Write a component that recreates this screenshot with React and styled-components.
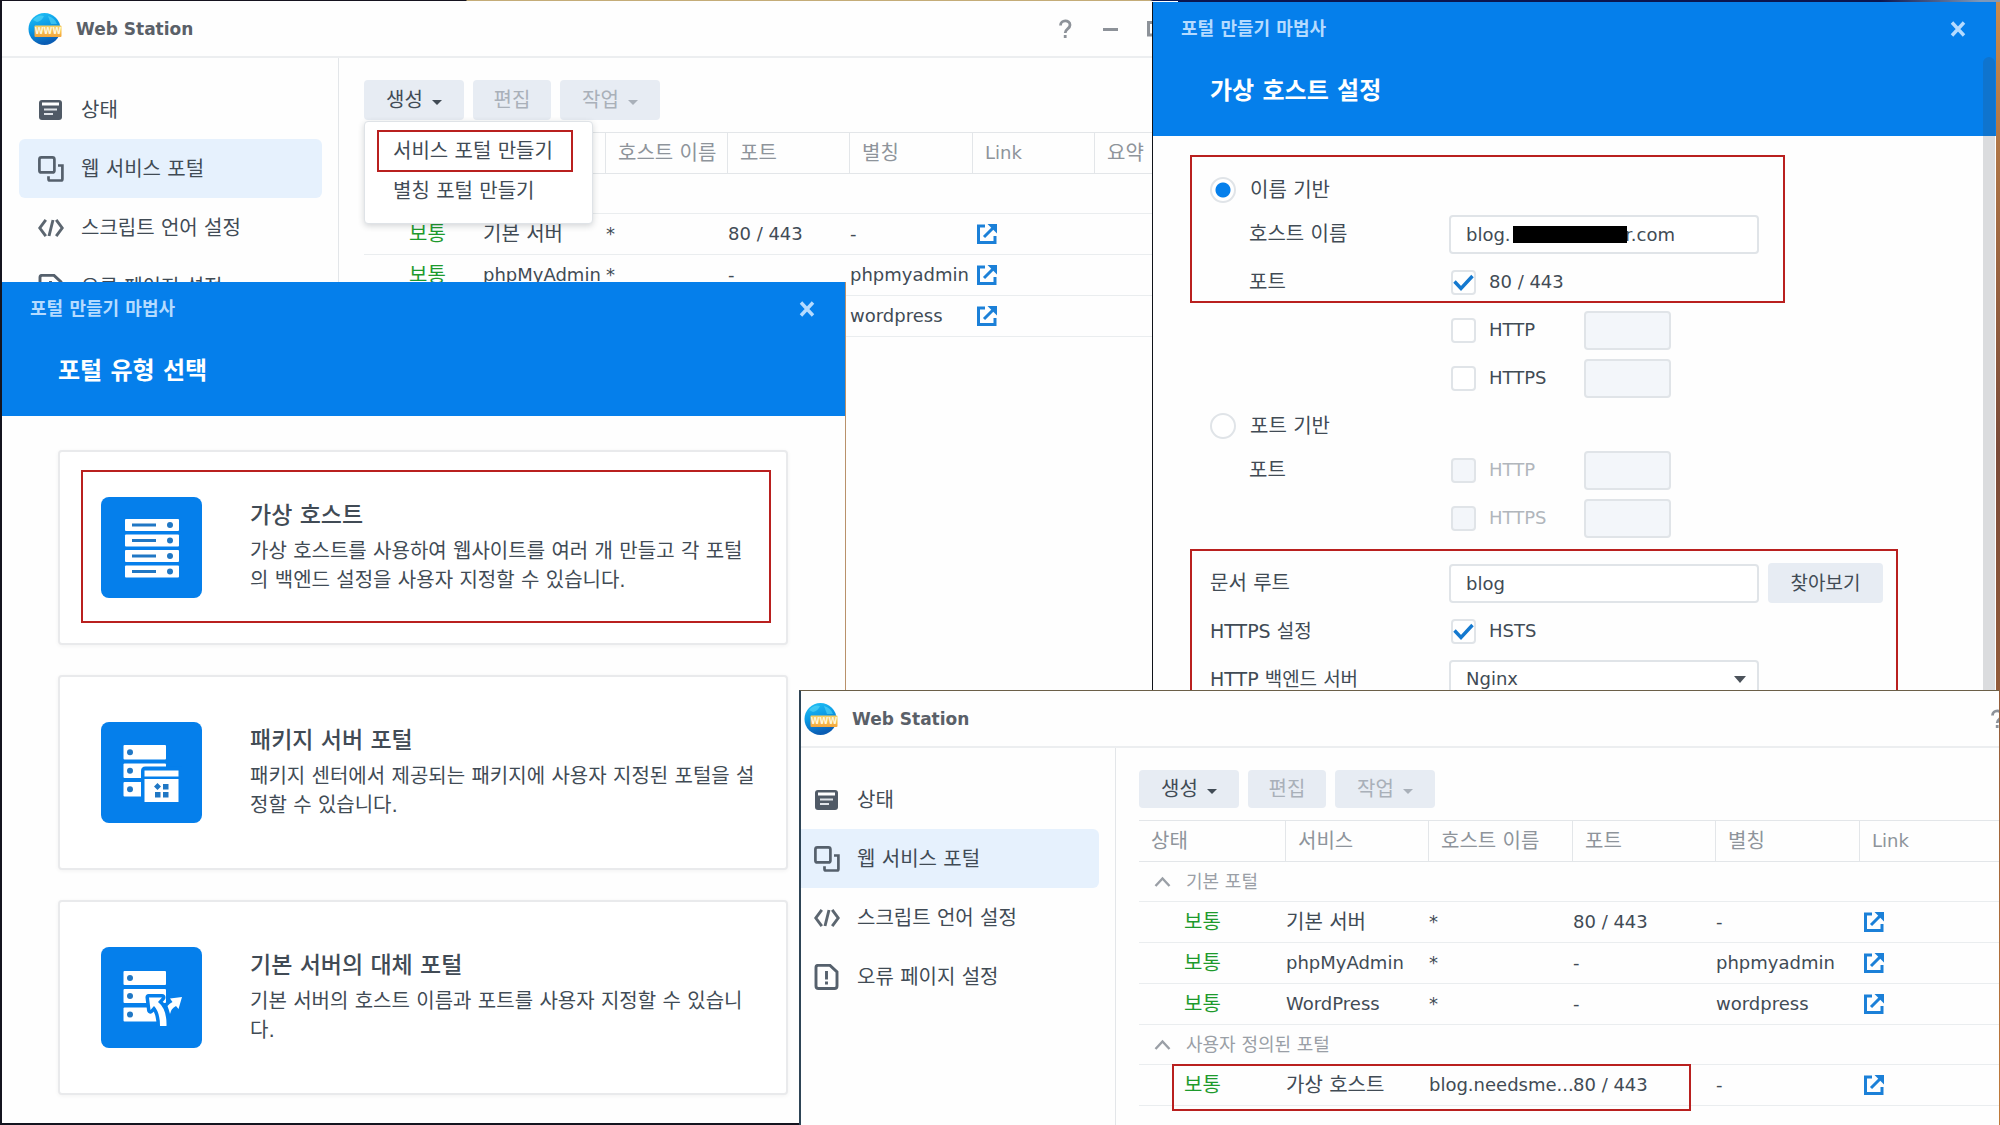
import React from "react";
import styled, { createGlobalStyle, css } from "styled-components";

const GlobalStyle = createGlobalStyle`
  *, *::before, *::after { box-sizing: border-box; }
  body {
    margin: 0;
    color: #414b55;
    font: 18px/24px "DejaVu Sans", "Noto Sans CJK KR", sans-serif;
  }
  button, input, select { font: inherit; color: inherit; }
`;

const BLUE = "#057feb";
const LINE = "#e3e6e9";

const Desktop = styled.div`
  position: relative;
  min-height: 100vh;
  overflow: hidden;
  background:
    linear-gradient(90deg, #15131f 466px, #c4ac78 467px 1150px, #0a1550 1153px 1880px, #7f98b8 1980px) top / 100% 2px no-repeat,
    linear-gradient(#c98a4c, #7a4a38 40%, #c07a3a) right / 4px 100% no-repeat,
    #14141f;
`;

/* ---------- application windows ---------- */

const FirstWindow = styled.section`
  position: absolute;
  top: 1px;
  left: 2px;
  bottom: 2px;
  width: 1176px;
  background: #fefefe;
`;

const SecondWindow = styled.section`
  position: absolute;
  top: 690px;
  left: 799px;
  right: 1px;
  bottom: 0;
  overflow: hidden;
  background: #fefefe;
  border-left: 2px solid #2e4456;
  border-top: 1px solid #6b5f48;
`;

const WideContent = styled.div`
  width: calc(100% + 111px);
`;

const TitleBar = styled.header`
  display: flex;
  align-items: center;
  height: 57px;
  padding-left: ${(p) => p.$inset}px;
  border-bottom: 2px solid #eceef0;
`;

const AppName = styled.h1`
  flex: 1;
  margin: 0 0 0 14px;
  font-size: 17px;
  line-height: 24px;
  font-weight: 700;
  color: #5a6068;
`;

const WindowButton = styled.button`
  display: grid;
  place-items: center;
  width: 45px;
  height: 45px;
  padding: 0;
  border: 0;
  background: none;
  color: #8d9299;
`;

const Columns = styled.div`
  display: flex;
  min-height: 440px;
`;

const Sidebar = styled.nav`
  flex: none;
  width: ${(p) => p.$width}px;
  padding: 22px 16px 0 ${(p) => p.$inset}px;
  border-right: 1px solid ${LINE};
`;

const NavLink = styled.a`
  display: flex;
  align-items: center;
  gap: 17px;
  height: 59px;
  padding-left: ${(p) => p.$indent}px;
  border-radius: ${(p) => (p.$cut ? "0 6px 6px 0" : "6px")};
  background: ${(p) => (p.$active ? "#e6f1fd" : "none")};
  color: inherit;
  font-size: 20px;
  text-decoration: none;
`;

const Main = styled.main`
  position: relative;
  flex: 1;
  min-width: 0;
  padding: 22px 0 0 ${(p) => p.$inset}px;
`;

const Toolbar = styled.div`
  display: flex;
  gap: 9px;
  height: ${(p) => (p.$compact ? 38 : 40)}px;
  margin-bottom: 12px;
`;

const ToolButton = styled.button`
  display: flex;
  align-items: center;
  justify-content: center;
  gap: 9px;
  width: ${(p) => (p.$drop ? 100 : 78)}px;
  padding: 0;
  border: 0;
  border-radius: 4px;
  background: #e7ecf3;
  font-size: 20px;
  line-height: 24px;
  &:disabled { color: #a9b0b9; }
`;

const Caret = styled.span`
  margin-top: 4px;
  border: 5px solid transparent;
  border-top-color: currentColor;
  border-bottom: 0;
`;

const Menu = styled.ul`
  position: absolute;
  top: 63px;
  left: 25px;
  z-index: 2;
  width: 229px;
  margin: 0;
  padding: 9px 0 12px;
  list-style: none;
  background: #fff;
  border: 1px solid #dfe3e7;
  border-radius: 4px;
  box-shadow: 0 2px 6px rgba(40, 50, 60, 0.2);
`;

const MenuItem = styled.li`
  height: 40px;
  margin: 0 20px 0 13px;
  outline: ${(p) => (p.$marked ? "2px solid #b9201f" : "none")};
  outline-offset: -1px;
  button {
    width: 100%;
    height: 40px;
    padding: 0 0 0 15px;
    border: 0;
    background: none;
    font-size: 20px;
    text-align: left;
    white-space: nowrap;
  }
`;

const PortalTable = styled.table`
  width: 100%;
  table-layout: fixed;
  border-collapse: separate;
  border-spacing: 0;
  th {
    height: 42px;
    padding: 0 0 0 12px;
    border: 1px solid ${LINE};
    border-width: 1px 0 1px 1px;
    color: #8e949b;
    font-weight: 400;
    text-align: left;
    white-space: nowrap;
  }
  th:first-child { border-left: 0; }
  td {
    height: 41px;
    padding: 0 0 0 1px;
    border-bottom: 1px solid #eaedef;
    white-space: nowrap;
  }
  td:only-child { height: 40px; }
`;

const Cell = styled.td`
  font-size: ${(p) => (p.$korean ? 20 : 18)}px;
`;

const HeadText = styled.span`
  visibility: ${(p) => (p.$covered ? "hidden" : "visible")};
  font-size: ${(p) => (p.$korean ? 20 : 18)}px;
`;

const Status = styled.span`
  padding-left: 44px;
  font-size: 20px;
  color: #1d9a2c;
`;

const GroupLabel = styled.span`
  visibility: ${(p) => (p.$covered ? "hidden" : "visible")};
  display: flex;
  align-items: center;
  gap: 15px;
  padding-left: 14px;
  color: #9a9fa6;
`;

const LinkAnchor = styled.a`
  display: block;
  height: 22px;
  padding-left: 3px;
  color: #1b80d8;
`;

const Marker = styled.div`
  position: absolute;
  top: ${(p) => p.$top}px;
  left: ${(p) => p.$left}px;
  width: ${(p) => p.$width}px;
  height: ${(p) => p.$height}px;
  border: 2px solid #b9201f;
  pointer-events: none;
`;

/* ---------- wizard dialogs ---------- */

const dialog = css`
  position: absolute;
  background: #fefefe;
  overflow: hidden;
`;

const TypeDialog = styled.section`
  ${dialog}
  top: 282px;
  left: 2px;
  bottom: 2px;
  width: 844px;
  border-right: 1px solid #b9916b;
`;

const HostDialog = styled.section`
  ${dialog}
  top: 2px;
  left: 1152px;
  right: 4px;
  bottom: 0;
  border-left: 1px solid #10131a;
`;

const DialogHead = styled.header`
  height: 134px;
  background: ${BLUE};
  color: #fff;
`;

const DialogBar = styled.div`
  display: flex;
  align-items: center;
  justify-content: space-between;
  height: 53px;
  padding: 0 28px;
  color: #b5dbff;
  font-weight: 700;
`;

const CloseButton = styled.button`
  display: grid;
  place-items: center;
  width: 20px;
  height: 20px;
  padding: 0;
  border: 0;
  background: none;
`;

const DialogTitle = styled.h2`
  margin: 0;
  padding-left: ${(p) => p.$inset}px;
  font-size: 24px;
  line-height: 72px;
  font-weight: 700;
`;

const CardList = styled.div`
  display: flex;
  flex-direction: column;
  gap: 30px;
  padding: 34px 57px 0 56px;
`;

const Card = styled.button`
  position: relative;
  display: flex;
  align-items: center;
  gap: 48px;
  height: 195px;
  padding: 0 20px 0 41px;
  border: 2px solid #e9eaec;
  border-radius: 4px;
  background: #fff;
  box-shadow: 0 1px 4px rgba(0, 0, 0, 0.05);
  text-align: left;
  svg { flex: none; }
`;

const CardText = styled.span`
  width: 508px;
  padding-bottom: 6px;
  font-size: 20px;
  line-height: 29px;
`;

const CardName = styled.strong`
  display: block;
  font-size: 23px;
  line-height: 43px;
  font-weight: 500;
`;

const Form = styled.form`
  padding: 30px 0 0 57px;
`;

const Field = styled.div`
  display: flex;
  align-items: center;
  height: 48px;
`;

const FieldLabel = styled.label`
  width: 239px;
  padding-left: ${(p) => (p.$nested ? 39 : 0)}px;
  font-size: ${(p) => (p.$mixed ? 19 : 20)}px;
`;

const RadioRow = styled.label`
  display: flex;
  align-items: center;
  gap: 14px;
  height: 44px;
  padding-top: 4px;
  font-size: 20px;
`;

const Radio = styled.input`
  appearance: none;
  width: 26px;
  height: 26px;
  margin: 0;
  border: 2px solid #e0e4e8;
  border-radius: 50%;
  background: #fff;
  &:checked { background: radial-gradient(circle, ${BLUE} 7px, #fff 8px); }
`;

const CheckLabel = styled.label`
  display: flex;
  align-items: center;
  gap: 13px;
  width: 135px;
  color: ${(p) => (p.$off ? "#b1b6bc" : "inherit")};
`;

const CheckFrame = styled.span`
  display: grid;
  margin-left: 2px;
  > * { grid-area: 1 / 1; }
`;

const Check = styled.input`
  appearance: none;
  width: 25px;
  height: 25px;
  margin: 0;
  border: 2px solid #e0e4e8;
  border-radius: 4px;
  background: #fff;
  &:disabled { background: #f3f6fa; }
`;

const box = css`
  height: 39px;
  border: 2px solid #e0e4e8;
  border-radius: 4px;
  background: #fff;
`;

const TextBox = styled.input`
  ${box}
  width: 310px;
  padding: 0 15px;
`;

const PortBox = styled.input`
  ${box}
  width: 87px;
  background: #f3f6fa;
`;

const Picker = styled.select`
  ${box}
  appearance: none;
  width: 310px;
  padding: 0 15px;
`;

const PickerFrame = styled.span`
  display: grid;
  align-items: center;
  > * { grid-area: 1 / 1; }
`;

const PickerCaret = styled.span`
  justify-self: end;
  margin-right: 13px;
  border: 6px solid transparent;
  border-top: 7px solid #4c535b;
  border-bottom: 0;
`;

const MaskedField = styled.span`
  position: relative;
`;

const Redaction = styled.span`
  position: absolute;
  top: 11px;
  left: 64px;
  width: 114px;
  height: 17px;
  background: #000;
`;

const BrowseButton = styled.button`
  width: 115px;
  height: 40px;
  margin-left: 9px;
  border: 0;
  border-radius: 4px;
  background: #e7ecf3;
  font-size: 19px;
`;

const Section = styled.div`
  margin-top: 17px;
`;

const ScrollThumb = styled.div`
  position: absolute;
  top: 55px;
  right: 1px;
  bottom: 0;
  width: 12px;
  border-radius: 6px;
  background: rgba(60, 65, 75, 0.18);
`;

/* ---------- drawings ---------- */

const Globe = ({ id }) => (
  <svg width="34" height="34" viewBox="0 0 34 34" aria-hidden="true">
    <defs>
      <linearGradient id={id} x1="0" y1="0" x2="0.3" y2="1">
        <stop offset="0" stopColor="#22c3f6" />
        <stop offset="0.5" stopColor="#0b9be6" />
        <stop offset="1" stopColor="#0a5db4" />
      </linearGradient>
      <linearGradient id={id + "b"} x1="0" y1="0" x2="0" y2="1">
        <stop offset="0" stopColor="#f9cf62" />
        <stop offset="1" stopColor="#f3a73c" />
      </linearGradient>
    </defs>
    <circle cx="16.5" cy="17" r="16" fill={`url(#${id})`} />
    <path d="M5 8q5-6 11-4q-2 5-7 6zM20 4q7 2 9 8h-6z" fill="#5fdcf8" opacity="0.55" />
    <rect x="6.500" y="13.500" width="27" height="11.500" rx="1" fill={`url(#${id}b)`} />
    <text x="20" y="22" textAnchor="middle" fontSize="8" fontWeight="700" fill="#fff7dc">WWW</text>
  </svg>
);

const StatusIcon = () => (
  <svg width="26" height="26" viewBox="0 0 26 26" aria-hidden="true">
    <rect x="1" y="3" width="23" height="20" rx="3" fill="#505a66" />
    <path d="M4 7h17" stroke="#fff" strokeWidth="3" />
    <path d="M6 12.500h13M6 17h9" stroke="#dfe3e8" strokeWidth="2" />
  </svg>
);

const PortalIcon = () => (
  <svg width="26" height="26" viewBox="0 0 26 26" fill="none" stroke="#55606c" strokeWidth="2.700" aria-hidden="true">
    <rect x="1.400" y="1.400" width="15" height="15" rx="2" />
    <path d="M20 9.500h4.400V23a1.500 1.500 0 0 1-1.500 1.500H12a1.500 1.500 0 0 1-1.500-1.500v-2.800" />
  </svg>
);

const CodeIcon = () => (
  <svg width="26" height="26" viewBox="0 0 26 26" fill="none" stroke="#5c6670" strokeWidth="2.900" aria-hidden="true">
    <path d="M7.800 4.800L1.800 13l6 8.200M18.200 4.800l6 8.200l-6 8.200M15 5l-4 16" />
  </svg>
);

const ErrorPageIcon = () => (
  <svg width="26" height="26" viewBox="0 0 26 26" fill="none" stroke="#55606c" strokeWidth="2.900" aria-hidden="true">
    <path d="M4 1.400h12l7 6.500V22a2.500 2.500 0 0 1-2.500 2.500H4.500A2.500 2.500 0 0 1 2 22V3.500A2.100 2.100 0 0 1 4 1.400z" />
    <path d="M12.500 7v8.500M12.500 17.500v3" />
  </svg>
);

const OpenIcon = () => (
  <svg width="22" height="22" viewBox="0 0 22 22" fill="none" stroke="currentColor" strokeWidth="3" aria-hidden="true">
    <path d="M9 3H2.500v16.500H19v-6.500" />
    <path d="M8 14L18 4" />
    <path d="M11.500 1H21v9.500z" fill="currentColor" stroke="none" />
  </svg>
);

const ChevronUp = () => (
  <svg width="17" height="12" viewBox="0 0 17 12" fill="none" stroke="#9a9fa6" strokeWidth="2.400" aria-hidden="true">
    <path d="M1.500 10l7-7.500l7 7.500" />
  </svg>
);

const CloseIcon = () => (
  <svg width="16" height="16" viewBox="0 0 16 16" fill="none" stroke="#b5dbff" strokeWidth="3.400" aria-hidden="true">
    <path d="M2 1.500l12 13M14 1.500L2 14.500" />
  </svg>
);

const Tick = () => (
  <svg width="25" height="25" viewBox="0 0 25 25" fill="none" stroke="#1479cf" strokeWidth="3.400" aria-hidden="true">
    <path d="M3.500 11.500l6.500 7L21.500 6" />
  </svg>
);

const HelpIcon = () => (
  <svg width="16" height="20" viewBox="0 0 16 20" fill="none" stroke="currentColor" strokeWidth="2.800" aria-hidden="true">
    <path d="M2.500 6.500C2.500 0.500 12 0.500 12 6c0 4-4.800 3.800-4.800 8" />
    <path d="M7.200 16v3" />
  </svg>
);

const MinimizeIcon = () => (
  <svg width="16" height="16" viewBox="0 0 16 16" aria-hidden="true">
    <path d="M0 8.500h15" stroke="currentColor" strokeWidth="3" />
  </svg>
);

const MaximizeIcon = () => (
  <svg width="17" height="17" viewBox="0 0 17 17" aria-hidden="true">
    <path d="M1.500 2.500h14v12.500h-14z" fill="none" stroke="currentColor" strokeWidth="3" />
  </svg>
);

const HostArt = () => (
  <svg width="101" height="101" viewBox="0 0 101 101" aria-hidden="true">
    <rect width="101" height="101" rx="8" fill={BLUE} />
    {[22, 37.5, 53, 68.5].map((y) => (
      <g key={y}>
        <rect x="24" y={y} width="54" height="12" rx="1" fill="#fff" />
        <path d={`M31 ${y + 6}h24`} stroke="#2077c4" strokeWidth="3" />
        <circle cx="69" cy={y + 6} r="3" fill="#2077c4" />
      </g>
    ))}
  </svg>
);

const PackageArt = () => (
  <svg width="101" height="101" viewBox="0 0 101 101" aria-hidden="true">
    <rect width="101" height="101" rx="8" fill={BLUE} />
    {[23, 41.5, 60].map((y) => (
      <g key={y}>
        <rect x="22.500" y={y} width="42.500" height="14.500" rx="1" fill="#fff" />
        <circle cx="29" cy={y + 7.2} r="3" fill="#2077c4" />
      </g>
    ))}
    <path d="M40 84V49q0-4.500 4.500-4.500H81v39.500z" fill={BLUE} />
    <path d="M43.500 48.500h34v6h-34zM43.500 57h34v23h-34z" fill="#fff" />
    <path d="M56.500 61l3.500 3.500l-3.500 3.500l-3.500-3.500zM62 62h5.500v5.500H62zM54 70h5.500v5.500H54zM62 70h5.500v5.500H62z" fill="#2077c4" />
  </svg>
);

const AlternateArt = () => (
  <svg width="101" height="101" viewBox="0 0 101 101" aria-hidden="true">
    <rect width="101" height="101" rx="8" fill={BLUE} />
    {[24, 42, 60.5].map((y) => (
      <g key={y}>
        <rect x="22.500" y={y} width="42.500" height="14" rx="1" fill="#fff" />
        <circle cx="29" cy={y + 7} r="3" fill="#2077c4" />
      </g>
    ))}
    <path d="M48 50.500h13l-4 4.500q9 7 8.500 24h-6.500q0-14-6-20l-3.500 4z" fill={BLUE} stroke={BLUE} strokeWidth="7" strokeLinejoin="round" />
    <path d="M48 50.500h13l-4 4.500q9 7 8.500 24h-6.500q0-14-6-20l-3.500 4z" fill="#fff" />
    <path d="M66.500 59q2-2.500 5-4l-2.500-3.500l12-1.500l-3.500 12l-2.500-3q-5 2.500-6 8q-1-4-2.500-8z" fill="#fff" />
  </svg>
);

/* ---------- content ---------- */

const hangul = /[\uac00-\ud7a3]/;
const headings = ["상태", "서비스", "호스트 이름", "포트", "별칭", "Link", "요약"];
const defaultPortals = [
  ["기본 서버", "*", "80 / 443", "-"],
  ["phpMyAdmin", "*", "-", "phpmyadmin"],
  ["WordPress", "*", "-", "wordpress"],
];
const customPortals = [["가상 호스트", "blog.needsme...", "80 / 443", "-"]];

const navItems = [
  ["상태", StatusIcon],
  ["웹 서비스 포털", PortalIcon],
  ["스크립트 언어 설정", CodeIcon],
  ["오류 페이지 설정", ErrorPageIcon],
];

const cards = [
  ["가상 호스트", "가상 호스트를 사용하여 웹사이트를 여러 개 만들고 각 포털의 백엔드 설정을 사용자 지정할 수 있습니다.", HostArt],
  ["패키지 서버 포털", "패키지 센터에서 제공되는 패키지에 사용자 지정된 포털을 설정할 수 있습니다.", PackageArt],
  ["기본 서버의 대체 포털", "기본 서버의 호스트 이름과 포트를 사용자 지정할 수 있습니다.", AlternateArt],
];

const maskedHost = "blog." + "\u00a0".repeat(20) + "r.com";

function Navigation({ width, inset, indent, cut }) {
  return (
    <Sidebar $width={width} $inset={inset}>
      {navItems.map(([label, Icon], i) => (
        <NavLink key={label} href="#" $active={i === 1} $indent={indent} $cut={cut}>
          <Icon />
          {label}
        </NavLink>
      ))}
    </Sidebar>
  );
}

function Actions({ compact }) {
  return (
    <Toolbar $compact={compact}>
      <ToolButton type="button" $drop>생성 <Caret /></ToolButton>
      <ToolButton type="button" disabled>편집</ToolButton>
      <ToolButton type="button" disabled $drop>작업 <Caret /></ToolButton>
    </Toolbar>
  );
}

function Group({ label, rows, span, covered }) {
  return (
    <tbody>
      <tr>
        <td colSpan={span}><GroupLabel $covered={covered}><ChevronUp />{label}</GroupLabel></td>
      </tr>
      {rows.map((row) => (
        <tr key={row[0]}>
          <td><Status>보통</Status></td>
          {row.map((text, i) => (
            <Cell key={i} $korean={hangul.test(text)}>{text}</Cell>
          ))}
          <td colSpan={span - 5}>
            <LinkAnchor href="#" aria-label={row[0]}><OpenIcon /></LinkAnchor>
          </td>
        </tr>
      ))}
    </tbody>
  );
}

/* menuOpen hides the labels that lie beneath the open drop-down menu */
function Portals({ widths, custom, menuOpen }) {
  return (
    <PortalTable>
      <colgroup>
        {widths.map((w, i) => <col key={i} style={{ width: w }} />)}
      </colgroup>
      <thead>
        <tr>
          {headings.slice(0, widths.length).map((h, i) => (
            <th key={h}>
              <HeadText $korean={hangul.test(h)} $covered={menuOpen && i < 2}>{h}</HeadText>
            </th>
          ))}
        </tr>
      </thead>
      <Group label="기본 포털" rows={defaultPortals} span={widths.length} covered={menuOpen} />
      {custom && <Group label="사용자 정의된 포털" rows={customPortals} span={widths.length} />}
    </PortalTable>
  );
}

function Bar({ id, inset }) {
  return (
    <TitleBar $inset={inset}>
      <Globe id={id} />
      <AppName>Web Station</AppName>
      <WindowButton type="button" aria-label="도움말"><HelpIcon /></WindowButton>
      <WindowButton type="button" aria-label="최소화"><MinimizeIcon /></WindowButton>
      <WindowButton type="button" aria-label="최대화"><MaximizeIcon /></WindowButton>
    </TitleBar>
  );
}

function WizardHead({ title, inset }) {
  return (
    <DialogHead>
      <DialogBar>
        포털 만들기 마법사
        <CloseButton type="button" aria-label="닫기"><CloseIcon /></CloseButton>
      </DialogBar>
      <DialogTitle $inset={inset}>{title}</DialogTitle>
    </DialogHead>
  );
}

function CheckOption({ text, checked, off }) {
  return (
    <CheckLabel $off={off}>
      <CheckFrame>
        <Check type="checkbox" defaultChecked={checked} disabled={off} />
        {checked && <Tick />}
      </CheckFrame>
      {text}
    </CheckLabel>
  );
}

function PortField({ label, text, off }) {
  return (
    <Field>
      <FieldLabel as="span" $nested>{label}</FieldLabel>
      <CheckOption text={text} off={off} />
      <PortBox disabled aria-label={text} />
    </Field>
  );
}

export default function App() {
  return (
    <Desktop>
      <GlobalStyle />

      <FirstWindow>
        <Bar id="globe-a" inset={26} />
        <Columns>
          <Navigation width={337} inset={17} indent={19} />
          <Main $inset={25}>
            <Actions />
            <Menu>
              <MenuItem $marked><button type="button">서비스 포털 만들기</button></MenuItem>
              <MenuItem><button type="button">별칭 포털 만들기</button></MenuItem>
            </Menu>
            <Portals widths={[118, 123, 122, 122, 123, 122, "auto"]} menuOpen />
          </Main>
        </Columns>
      </FirstWindow>

      <TypeDialog>
        <WizardHead title="포털 유형 선택" inset={56} />
        <CardList>
          {cards.map(([name, text, Art], i) => (
            <Card key={name} type="button">
              <Art />
              <CardText><CardName>{name}</CardName>{text}</CardText>
              {i === 0 && <Marker $top={18} $left={21} $width={690} $height={153} />}
            </Card>
          ))}
        </CardList>
      </TypeDialog>

      <HostDialog>
        <WizardHead title="가상 호스트 설정" inset={57} />
        <Form>
          <RadioRow><Radio type="radio" name="base" defaultChecked />이름 기반</RadioRow>
          <Field>
            <FieldLabel htmlFor="host" $nested>호스트 이름</FieldLabel>
            <MaskedField>
              <TextBox id="host" defaultValue={maskedHost} />
              <Redaction />
            </MaskedField>
          </Field>
          <Field>
            <FieldLabel as="span" $nested>포트</FieldLabel>
            <CheckOption text="80 / 443" checked />
          </Field>
          <PortField text="HTTP" />
          <PortField text="HTTPS" />
          <RadioRow><Radio type="radio" name="base" />포트 기반</RadioRow>
          <PortField label="포트" text="HTTP" off />
          <PortField text="HTTPS" off />
          <Section>
            <Field>
              <FieldLabel htmlFor="root">문서 루트</FieldLabel>
              <TextBox id="root" defaultValue="blog" />
              <BrowseButton type="button">찾아보기</BrowseButton>
            </Field>
            <Field>
              <FieldLabel as="span" $mixed>HTTPS 설정</FieldLabel>
              <CheckOption text="HSTS" checked />
            </Field>
            <Field>
              <FieldLabel htmlFor="backend" $mixed>HTTP 백엔드 서버</FieldLabel>
              <PickerFrame>
                <Picker id="backend"><option>Nginx</option></Picker>
                <PickerCaret />
              </PickerFrame>
            </Field>
          </Section>
        </Form>
        <Marker $top={153} $left={37} $width={595} $height={148} />
        <Marker $top={547} $left={37} $width={708} $height={200} />
        <ScrollThumb />
      </HostDialog>

      <SecondWindow>
        <WideContent>
          <Bar id="globe-b" inset={3} />
          <Columns>
            <Navigation width={315} inset={0} indent={13} cut />
            <Main $inset={23}>
              <Actions compact />
              <Portals widths={[146, 143, 144, 143, 144, "auto"]} custom />
              <Marker $top={316} $left={56} $width={519} $height={47} />
            </Main>
          </Columns>
        </WideContent>
      </SecondWindow>
    </Desktop>
  );
}
